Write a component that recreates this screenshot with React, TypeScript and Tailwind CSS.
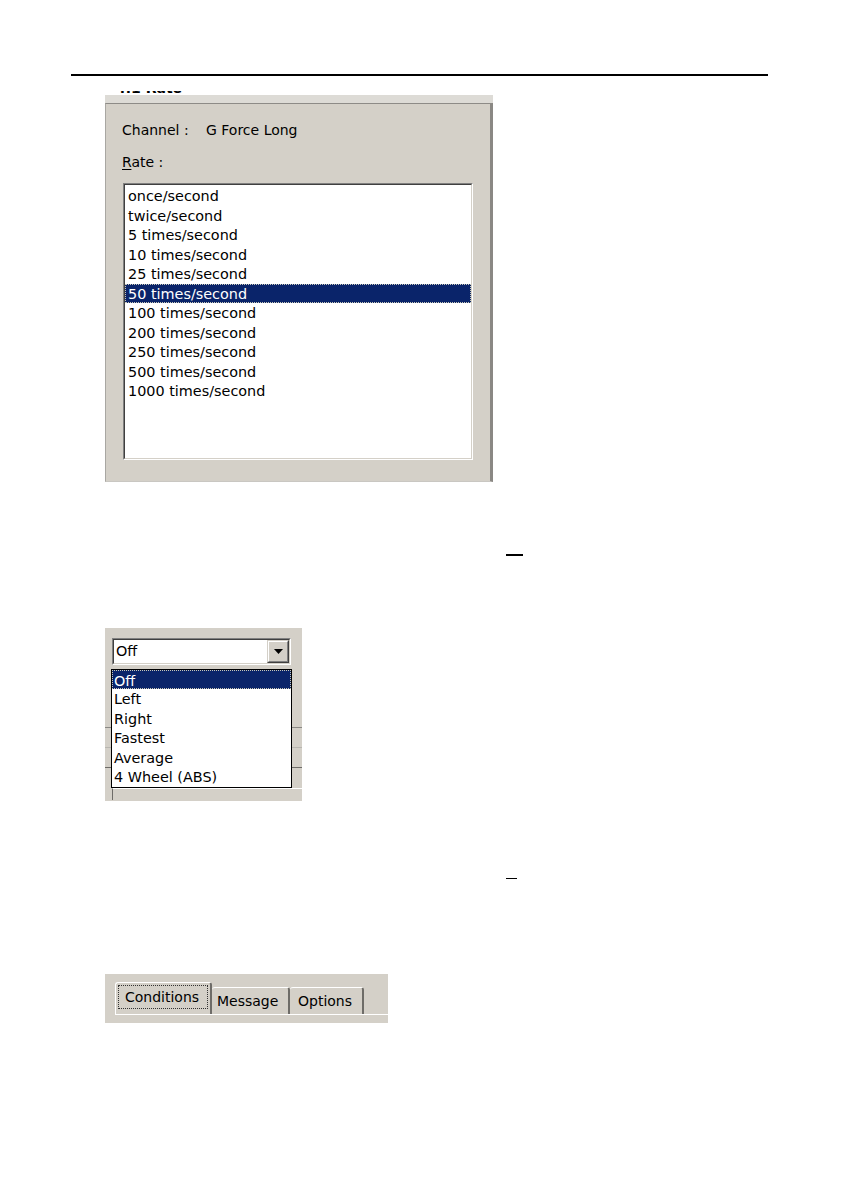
const rates = [
  "once/second",
  "twice/second",
  "5 times/second",
  "10 times/second",
  "25 times/second",
  "50 times/second",
  "100 times/second",
  "200 times/second",
  "250 times/second",
  "500 times/second",
  "1000 times/second",
];

const modes = ["Off", "Left", "Right", "Fastest", "Average", "4 Wheel (ABS)"];

function Sunken({ className, children }: { className: string; children: React.ReactNode }) {
  return (
    <div className={`border border-t-[#808080] border-l-[#808080] border-b-white border-r-white ${className}`}>
      <div className="h-full w-full border border-t-[#404040] border-l-[#404040] border-b-[#d4d0c8] border-r-[#d4d0c8] bg-white">
        {children}
      </div>
    </div>
  );
}

function RateDialog() {
  return (
    <div className="ml-[105px] h-[387px] w-[388px] bg-[#dddbd6] pt-[8px]">
      <div className="h-[379px] border-l border-t border-r-[3px] border-b border-l-[#a9a7a2] border-t-[#8d8b87] border-r-[#8a8884] border-b-[#c9c7c2] bg-[#d4d0c8]">
        <div className="flex pl-[16px] pt-[16px] text-[14px] leading-[20px] text-black">
          <span className="w-[84px]">Channel :</span>
          <span>G Force Long</span>
        </div>
        <div className="mt-[12px] pl-[16px] text-[14px] leading-[20px] text-black">
          <span className="underline underline-offset-2">R</span>ate :
        </div>
        <Sunken className="ml-[17px] mt-[11px] h-[277px] w-[350px]">
          <div className="flex flex-col pt-[1px] text-[14.4px] text-black">
            {rates.map((r) =>
              r === "50 times/second" ? (
                <div
                  key={r}
                  className="h-[19.5px] border border-dotted border-[#c8c8b8] bg-[#0a246a] pl-[2px] pt-[1px] leading-[17px] text-white"
                >
                  {r}
                </div>
              ) : (
                <div key={r} className="h-[19.5px] pl-[3px] pt-[1px] leading-[19px]">
                  {r}
                </div>
              )
            )}
          </div>
        </Sunken>
      </div>
    </div>
  );
}

function ComboDemo() {
  return (
    <div className="relative ml-[105px] h-[173px] w-[197px] bg-[#d4d0c8] pt-[10px]">
      <Sunken className="ml-[7px] h-[27px] w-[179px]">
        <div className="flex h-full items-center justify-between">
          <span className="pl-[2px] pt-[2px] text-[14.4px] text-black">Off</span>
          <div className="h-full w-[22px] border border-t-[#d4d0c8] border-l-[#d4d0c8] border-b-[#404040] border-r-[#404040]">
            <div className="flex h-full items-center justify-center border border-t-white border-l-white border-b-[#808080] border-r-[#808080] bg-[#d4d0c8]">
              <svg width="9" height="5" viewBox="0 0 9 5">
                <path d="M0 0h9L4.5 5z" fill="#000" />
              </svg>
            </div>
          </div>
        </div>
      </Sunken>
      <div className="mt-[62px] h-[21px] border-t border-b border-t-[#8a8884] border-b-[#b8b6b0]" />
      <div className="h-[20px] border-b border-b-[#6e6c68]" />
      <div className="ml-[7px] mt-[20px] h-[12px] border-l border-t border-l-[#6e6c68] border-t-white" />

      <div className="absolute left-[6px] top-[41px] w-[181px] border border-black bg-white text-[14.4px] text-black">
        {modes.map((m) =>
          m === "Off" ? (
            <div
              key={m}
              className="h-[19.6px] border border-dotted border-[#c8c8b8] bg-[#0a246a] pl-[1px] pt-[2px] leading-[16px] text-white"
            >
              {m}
            </div>
          ) : (
            <div key={m} className="h-[19.6px] pl-[2px] pt-[2px] leading-[17.6px]">
              {m}
            </div>
          )
        )}
      </div>
    </div>
  );
}

function TabsDemo() {
  return (
    <div className="ml-[105px] flex h-[49px] w-[283px] flex-col bg-[#d4d0c8] pt-[8px]">
      <div className="flex h-[32px] items-end pl-[10px]">
        <div className="z-10 flex h-[32px] w-[97px] items-start rounded-t-[3px] border-l border-t border-r-2 border-l-white border-t-white border-r-[#6e6c68] bg-[#d4d0c8] px-[2px] pt-[2px]">
          <div className="flex h-[24px] w-full items-center border border-dotted border-[#333] pl-[6px] pt-[1px] text-[14px] text-black">
            Conditions
          </div>
        </div>
        <div className="flex h-[27px] w-[78px] items-center rounded-t-[3px] border-t border-r-2 border-t-white border-r-[#6e6c68] pl-[5px] text-[14px] text-black">
          Message
        </div>
        <div className="flex h-[27px] w-[74px] items-center rounded-t-[3px] border-t border-r-2 border-t-white border-r-[#6e6c68] pl-[8px] text-[14px] text-black">
          Options
        </div>
      </div>
      <div className="ml-[10px] h-px bg-white" />
    </div>
  );
}

export default function App() {
  return (
    <div className="h-[1190px] w-[842px] overflow-hidden bg-white pt-[74px] font-['DejaVu_Sans',sans-serif]">
      <div className="ml-[71px] h-[2px] w-[697px] bg-black" />

      <div className="ml-[116px] mt-[15px] h-[4px] overflow-hidden">
        <div className="-mt-[9px] text-[14px] font-bold leading-[13px] text-black">4.1 Rate</div>
      </div>

      <RateDialog />

      <div className="ml-[506px] mt-[72px] h-[1.5px] w-[17px] bg-black" />

      <div className="mt-[72px]">
        <ComboDemo />
      </div>

      <div className="ml-[506px] mt-[77px] h-[1.5px] w-[11px] bg-black" />

      <div className="mt-[95px]">
        <TabsDemo />
      </div>
    </div>
  );
}
